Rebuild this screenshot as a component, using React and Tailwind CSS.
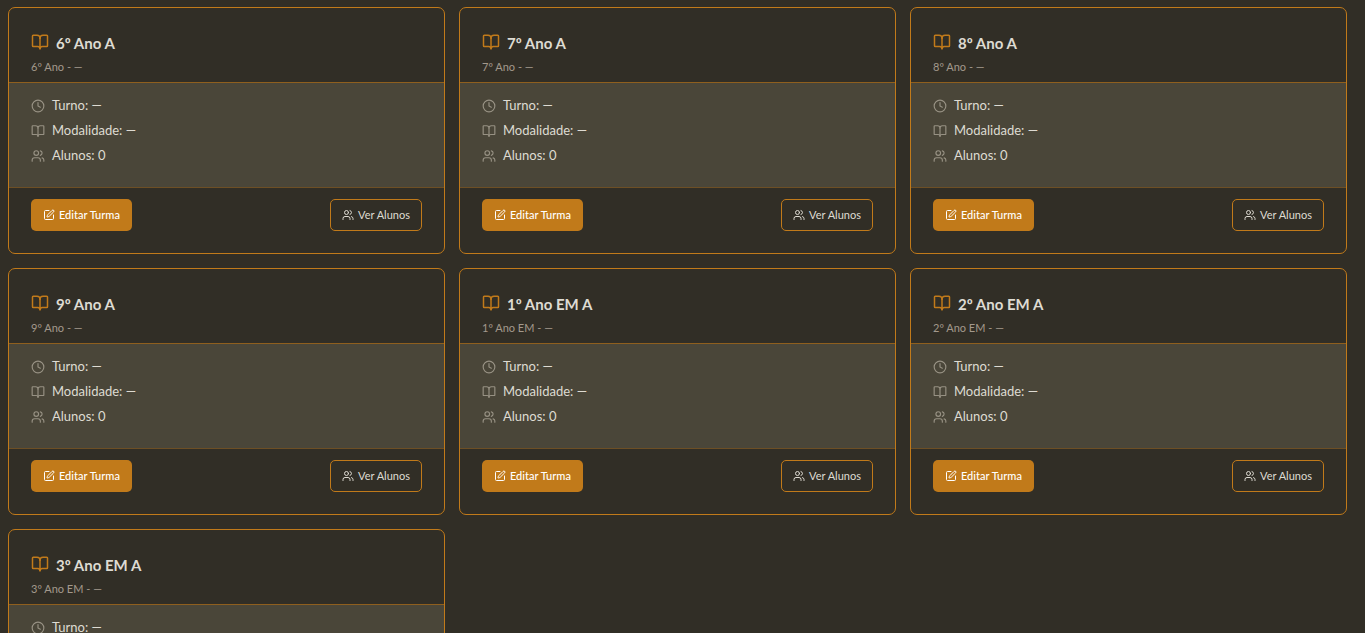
import { BookOpen, Clock, SquarePen, Users } from "lucide-react";

const classes = [
  { name: "6º Ano A", grade: "6º Ano" },
  { name: "7º Ano A", grade: "7º Ano" },
  { name: "8º Ano A", grade: "8º Ano" },
  { name: "9º Ano A", grade: "9º Ano" },
  { name: "1º Ano EM A", grade: "1º Ano EM" },
  { name: "2º Ano EM A", grade: "2º Ano EM" },
  { name: "3º Ano EM A", grade: "3º Ano EM" },
];

function Detail({ icon: Icon, children }) {
  return (
    <li className="flex items-center gap-[7px]">
      <Icon className="mt-px size-[14px] text-[#979183]" aria-hidden="true" />
      <span>{children}</span>
    </li>
  );
}

function ClassCard({ name, grade }) {
  return (
    <article className="overflow-hidden rounded-[7px] border border-[#c17a1a] bg-[#312e26]">
      <header className="border-b border-[#8f5f1e] px-[22px] pt-[22px] pb-2">
        <h2 className="flex items-center gap-[7px] text-[15px] leading-[26px] font-bold text-[#dedbd2]">
          <BookOpen className="mb-[2px] size-[18px] text-[#c17a1a]" aria-hidden="true" />
          {name}
        </h2>
        <p className="mt-1 text-[11px] leading-[14px] text-[#a3998c]">{grade} - —</p>
      </header>
      <ul className="flex flex-col gap-[3px] bg-[#4a4639] px-[22px] pt-[11px] pb-[21px] text-[13px] leading-[22px] text-[#dedbd2]">
        <Detail icon={Clock}>Turno: —</Detail>
        <Detail icon={BookOpen}>Modalidade: —</Detail>
        <Detail icon={Users}>Alunos: 0</Detail>
      </ul>
      <footer className="flex items-center justify-between border-t border-[#6d4f25] px-[22px] pt-[11px] pb-[22px] text-[11px] leading-4">
        <button type="button" className="flex h-8 items-center gap-1 rounded-[5px] bg-[#c17a1a] px-3 font-medium text-white">
          <SquarePen className="size-3" aria-hidden="true" />
          Editar Turma
        </button>
        <button type="button" className="flex h-8 items-center gap-1 rounded-[5px] border border-[#c17a1a] px-[11px] text-[#dedbd2]">
          <Users className="size-3" aria-hidden="true" />
          Ver Alunos
        </button>
      </footer>
    </article>
  );
}

export default function App() {
  return (
    <main className="min-h-screen bg-[#312e26] pt-[7px] pr-[18px] pb-2 pl-2 font-['Lato',sans-serif]">
      <div className="grid grid-cols-1 gap-[14px] sm:grid-cols-2 lg:grid-cols-3">
        {classes.map((item) => (
          <ClassCard key={item.name} {...item} />
        ))}
      </div>
    </main>
  );
}
